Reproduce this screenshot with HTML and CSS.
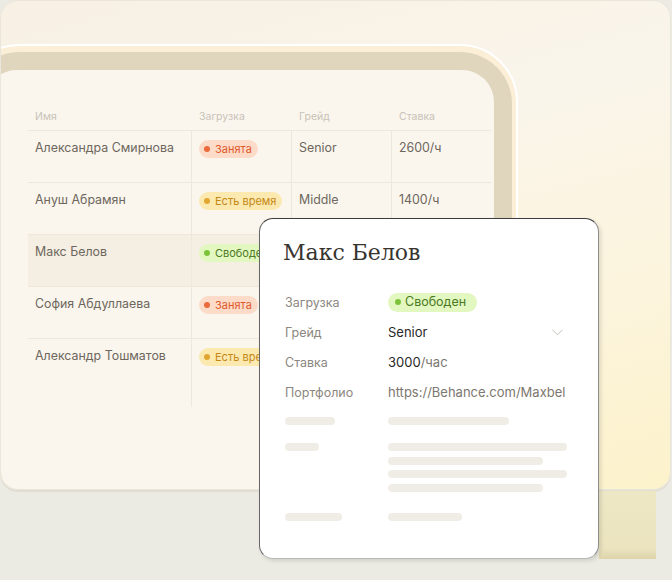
FILE: index.html
```html
<!DOCTYPE html>
<html lang="ru">
<head>
<meta charset="utf-8">
<title>Команда</title>
<link rel="stylesheet" href="styles.css">
</head>
<body>
<div class="scene">
  <div class="card">
    <div class="frame">
      <div class="frame-tan">
        <div class="panel">
          <div class="tbl">
            <div class="row head">
              <div class="cell">Имя</div>
              <div class="cell">Загрузка</div>
              <div class="cell">Грейд</div>
              <div class="cell">Ставка</div>
            </div>
            <div class="row">
              <div class="cell">Александра Смирнова</div>
              <div class="cell"><span class="badge busy"><i class="dot"></i>Занята</span></div>
              <div class="cell">Senior</div>
              <div class="cell">2600/ч</div>
            </div>
            <div class="row">
              <div class="cell">Ануш Абрамян</div>
              <div class="cell"><span class="badge time"><i class="dot"></i>Есть время</span></div>
              <div class="cell">Middle</div>
              <div class="cell">1400/ч</div>
            </div>
            <div class="row active">
              <div class="cell">Макс Белов</div>
              <div class="cell"><span class="badge free"><i class="dot"></i>Свободен</span></div>
              <div class="cell">Senior</div>
              <div class="cell">3000/ч</div>
            </div>
            <div class="row">
              <div class="cell">София Абдуллаева</div>
              <div class="cell"><span class="badge busy"><i class="dot"></i>Занята</span></div>
              <div class="cell">Middle</div>
              <div class="cell">1800/ч</div>
            </div>
            <div class="row last">
              <div class="cell">Александр Тошматов</div>
              <div class="cell"><span class="badge time"><i class="dot"></i>Есть время</span></div>
              <div class="cell">Junior</div>
              <div class="cell">1200/ч</div>
            </div>
          </div>
        </div>
      </div>
    </div>
  </div>
  <div class="card-edge"></div>

  <div class="popup">
    <h2 class="popup-title">Макс Белов</h2>
    <div class="props">
      <div class="label">Загрузка</div>
      <div class="value"><span class="badge big free"><i class="dot"></i>Свободен</span></div>
      <div class="label">Грейд</div>
      <div class="value select"><span class="strong">Senior</span>
        <svg class="chev" width="11" height="7" viewBox="0 0 11 7"><polyline points="0.5,0.8 5.5,5.8 10.5,0.8" fill="none" stroke="#c4c0b9" stroke-width="1"/></svg>
      </div>
      <div class="label">Ставка</div>
      <div class="value"><span class="strong">3000</span>/час</div>
      <div class="label">Портфолио</div>
      <div class="value">https://Behance.com/Maxbel</div>
    </div>
    <div class="skel">
      <div class="sk-left"><span class="bar w50"></span></div>
      <div class="sk-right"><span class="bar w121"></span></div>
      <div class="sk-left gap2"><span class="bar w34"></span></div>
      <div class="sk-right gap2">
        <span class="bar w179"></span>
        <span class="bar w155"></span>
        <span class="bar w179"></span>
        <span class="bar w155"></span>
      </div>
      <div class="sk-left gap3"><span class="bar w57"></span></div>
      <div class="sk-right gap3"><span class="bar w74"></span></div>
    </div>
  </div>
</div>
</body>
</html>
```

FILE: styles.css
```css
* { box-sizing: border-box; }

html, body {
  margin: 0;
  padding: 0;
}

body {
  background: #ecebe3;
  font-family: "Inter", "Noto Sans", sans-serif;
  width: 672px;
  height: 580px;
  overflow: hidden;
}

.scene {
  position: relative;
  width: 672px;
  height: 580px;
}

.card {
  width: 671px;
  height: 490px;
  border-radius: 18px;
  overflow: hidden;
  padding-top: 44px;
  border: 1px solid #ebe6dc;
  background: linear-gradient(165deg, #f7f0e3 0%, #faf5eb 35%, #fcf4dc 70%, #fcf2cb 100%);
  box-shadow: 0 2px 0 #e1ddd2;
}

.frame {
  margin-left: -40px;
  margin-top: -1px;
  width: 557px;
  border: 2px solid #ffffff;
  border-radius: 58px;
  background: #fcefd7;
  padding: 6px 4px 0 4px;
}

.frame-tan {
  background: #e0d5bd;
  border-radius: 52px;
  padding: 18px 18px 0 18px;
}

.panel {
  background: #faf6ee;
  border-radius: 32px;
  height: 480px;
  padding: 30px 0 0 43px;
}

.tbl {
  width: 463px;
}

.row {
  display: grid;
  grid-template-columns: 163px 100px 100px 100px;
  height: 52px;
  border-bottom: 1px solid #ede7dc;
  font-size: 12.4px;
  line-height: 16px;
  color: #6e675d;
}

.row .cell {
  padding: 9px 6px 0 7px;
  white-space: nowrap;
  overflow: hidden;
}

.row .cell + .cell {
  border-left: 1px solid #ede7dc;
}

.row.head {
  height: 31px;
  font-size: 10.5px;
  line-height: 13px;
  color: #c8c2b8;
}

.row.head .cell {
  padding-top: 10px;
}

.row.head .cell + .cell {
  border-left: none;
  padding-left: 8px;
}

.row.active {
  background: #f5eee2;
}

.row.last {
  height: 68px;
  border-bottom: none;
}

.badge {
  display: inline-flex;
  align-items: center;
  height: 18px;
  border-radius: 9px;
  padding: 0 6px 0 5px;
  font-size: 11px;
  line-height: 18px;
  gap: 5px;
  white-space: nowrap;
}

.dot {
  display: block;
  width: 6px;
  height: 6px;
  border-radius: 50%;
  background: currentColor;
}

.badge.busy { background: #fcdcc9; color: #e0582a; }
.badge.busy .dot { background: #ea6a3c; }
.badge.time { background: #fbe9b0; color: #c58817; }
.badge.time .dot { background: #e2a630; }
.badge.free { background: #e3f7c1; color: #4b7a22; }
.badge.free .dot { background: #7cc33a; }

.card-edge {
  position: absolute;
  left: 599px;
  top: 491px;
  width: 57px;
  height: 68px;
  background: linear-gradient(to bottom, #eee7c5 0%, #ebe4bf 84%, #ddd4a9 100%);
}

.popup {
  position: absolute;
  left: 259px;
  top: 218px;
  width: 340px;
  height: 341px;
  background: #ffffff;
  border: 1px solid;
  border-color: #3d3d3d #8c8c8c #b8b8b8 #666666;
  border-radius: 14px;
  padding: 20px 25px 0 25px;
  box-shadow: 2px 2px 4px rgba(0, 0, 0, 0.12);
}

.popup-title {
  margin: 0 0 0 -2px;
  font-family: "DejaVu Serif", serif;
  font-weight: normal;
  font-size: 22px;
  line-height: 28px;
  color: #37342f;
}

.props {
  margin-top: 20px;
  display: grid;
  grid-template-columns: 103px 1fr;
  grid-auto-rows: 30px;
  align-items: center;
  font-size: 13px;
  color: #7c776f;
}

.label {
  font-size: 12.5px;
  color: #8c8780;
}

.strong {
  color: #2a2825;
}

.value.select {
  display: flex;
  justify-content: space-between;
  align-items: center;
  padding-right: 10px;
}

.chev {
  display: block;
}

.badge.big {
  height: 19px;
  border-radius: 10px;
  font-size: 12.5px;
  padding: 0 11px 0 7px;
  gap: 4px;
}

.skel {
  margin-top: 10px;
  display: grid;
  grid-template-columns: 103px 1fr;
}

.sk-left, .sk-right {
  display: flex;
  flex-direction: column;
  gap: 5.5px;
}

.gap2 { margin-top: 18px; }
.gap3 { margin-top: 21px; }

.bar {
  display: block;
  height: 8px;
  border-radius: 4px;
  background: #efede6;
}

.w50 { width: 50px; }
.w34 { width: 34px; }
.w57 { width: 57px; }
.w121 { width: 121px; }
.w179 { width: 179px; }
.w155 { width: 155px; }
.w74 { width: 74px; }
```
